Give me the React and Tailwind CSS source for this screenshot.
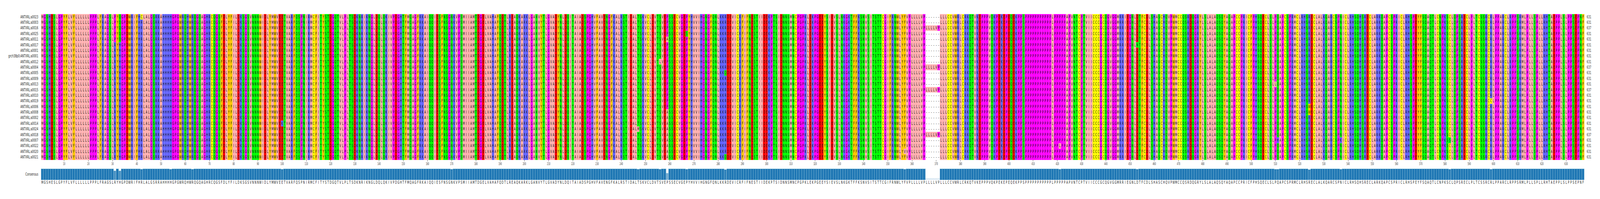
const CONSENSUS = [
  "MGSHESLGPYFLVFLLLLLLPPPLFRAGSLRYHGPDWRIFHRLALGSRRAHHHHGPGWRQHWR",
  "QGQAGHRCQGSFDLYFILDKSGSVNNNWIDLYMWVEETVARFQSPNIRMCFITYSTDGQTVLPLTSDKNRIKNGLDQ",
  "LQKIVPDGHTFMQAGFRKAIQQIESFNSGNKVPSMIIAMTDGELVAHAFQDTLREAQKARKLGANVYTLGVADYNLDQ",
  "ITAIADSPGHVFAVENGFKALRSTIDALTSKVCLDVTSVEPSSECVGEPYHVVIHGNGFQNLKKRDEVICRFIFNESTI",
  "IDEKPTSIDNNSMNCPGPKLEKPGEEYSIEVSLNKGKTFFKSNVSITSTTCGIFRNWLYFVPLLLLVPLLLLVPLLL",
  "CCVWRLCRKQTVKEPPPVQKPEKEPEQEKPPSPPPPPPPPPPPLPPPPPAPVNTCPTVIICCCGCQGVGGMRRIEGNLD",
  "TFCDLSHASCHQVPWMCCQSRDQGRYLSLALAQSQYAQAPCCPRICFPHSQECLSLPQAPCSPRMCLRHSRECLALKQA",
  "RCSPNICLRHSQHSRECLARKQAPCSPRICLRHSPEYFSQAQTLCNPKSCLQPSRECLPLTCSSRCRLPPARCLRPPS",
  "RMLPLLSPLLRHTAEPPLSLPPSEPNF",
].join("");

const LABELS = [
  "ANTXRL:a0023", "ANTXRL:a0003", "ANTXRL:a0016", "ANTXRL:a0025", "ANTXRL:a0011",
  "ANTXRL:a0017", "ANTXRL:a0001", "grch38p0:ANTXRL:a0001", "ANTXRL:a0012", "ANTXRL:a0004",
  "ANTXRL:a0005", "ANTXRL:a0009", "ANTXRL:a0013", "ANTXRL:a0015", "ANTXRL:a0010",
  "ANTXRL:a0019", "ANTXRL:a0006", "ANTXRL:a0008", "ANTXRL:a0002", "ANTXRL:a0014",
  "ANTXRL:a0024", "ANTXRL:a0018", "ANTXRL:a0007", "ANTXRL:a0022", "ANTXRL:a0020",
  "ANTXRL:a0021",
];

// rows that keep the LLLLVP insert at columns 366-371
const INSERT_ROWS = [2, 9, 13, 21];

// [row, column (1-based), residue]
const VARIANTS = [
  [0, 31, "P"], [1, 31, "P"], [2, 31, "P"], [3, 31, "P"], [4, 31, "P"],
  [0, 33, "Q"], [1, 33, "Q"], [2, 33, "Q"], [3, 33, "Q"], [4, 33, "Q"],
  [0, 42, "C"], [13, 54, "R"], [14, 63, "H"], [19, 100, "K"], [11, 170, "S"],
  [20, 247, "M"], [8, 256, "L"], [3, 267, "S"], [10, 283, "Q"], [25, 283, "Q"],
  [4, 259, "A"], [17, 259, "A"], [18, 259, "A"], [19, 259, "A"], [20, 259, "A"],
  [21, 259, "A"], [22, 259, "A"], [23, 259, "A"], [24, 259, "A"], [25, 259, "A"],
  [24, 357, "V"], [23, 421, "L"], [5, 453, "N"], [12, 510, "L"], [22, 511, "H"],
  [16, 524, "W"], [17, 524, "W"], [22, 537, "K"], [22, 582, "S"], [15, 599, "C"],
];

const ZAPPO = {
  A: "bg-[#ffafaf]",
  V: "bg-[#ffafaf]",
  I: "bg-[#ffafaf]",
  L: "bg-[#ffafaf]",
  M: "bg-[#ffafaf]",
  F: "bg-[#ffc800]",
  W: "bg-[#ffc800]",
  Y: "bg-[#ffc800]",
  K: "bg-[#6464ff]",
  R: "bg-[#6464ff]",
  H: "bg-[#6464ff]",
  D: "bg-[#ff0000]",
  E: "bg-[#ff0000]",
  S: "bg-[#00ff00]",
  T: "bg-[#00ff00]",
  N: "bg-[#00ff00]",
  Q: "bg-[#00ff00]",
  G: "bg-[#ff00ff]",
  P: "bg-[#ff00ff]",
  C: "bg-[#ffff00]",
  "-": "bg-white",
};

const buildRows = () =>
  LABELS.map((label, r) => {
    const seq = CONSENSUS.split("");
    if (!INSERT_ROWS.includes(r)) {
      for (let i = 365; i < 371; i++) seq[i] = "-";
    }
    VARIANTS.filter((v) => v[0] === r).forEach((v) => {
      seq[v[1] - 1] = v[2];
    });
    return { label, seq, length: seq.filter((c) => c !== "-").length };
  });

const ROWS = buildRows();
const COLUMNS = CONSENSUS.split("");
const IDENTITY = COLUMNS.map(
  (c, i) => ROWS.filter((row) => row.seq[i] === c).length / ROWS.length,
);

// the browser window can come out narrower than the 6656px plot, so squeeze it to fit
const FIT = Math.min(1, window.innerWidth / 6656);

const Label = ({ children }) => (
  <div className="w-[159px] mr-[12px] shrink-0 text-right whitespace-nowrap text-[#222]">
    {children}
  </div>
);

const App = () => {
  return (
    <div className="w-screen h-[510px] overflow-hidden bg-white">
      <div
        className="w-[6656px] h-[510px] origin-top-left pt-[36px] font-['DejaVu_Sans',sans-serif] [font-stretch:condensed] text-[11px] leading-none"
        style={{ transform: `scaleX(${FIT})` }}
      >
        {/* Alignment */}
        {ROWS.map((row) => (
          <div key={row.label} className="flex items-center h-[14.385px]">
            <Label>{row.label}</Label>
            <div className="flex h-full">
              {row.seq.map((c, i) => (
                <div
                  key={i}
                  className={`w-[10.08px] shrink-0 flex items-center justify-center text-[#111] ${ZAPPO[c]}`}
                >
                  {c}
                </div>
              ))}
            </div>
            <div className="ml-[10px] text-[#333]">{row.length}</div>
          </div>
        ))}

        {/* Ruler */}
        <div className="flex h-[22px]">
          <div className="w-[171px] shrink-0" />
          {COLUMNS.map((_, i) => (
            <div key={i} className="w-[10.08px] shrink-0 flex flex-col items-center">
              {(i + 1) % 10 === 0 && (
                <>
                  <div className="w-px h-[4px] bg-[#333]" />
                  <div className="mt-[3px] text-[8px] text-[#333] whitespace-nowrap">{i + 1}</div>
                </>
              )}
            </div>
          ))}
        </div>

        {/* Consensus identity */}
        <div className="flex items-center h-[29px]">
          <Label>Consensus</Label>
          <div className="flex h-full">
            {IDENTITY.map((v, i) => (
              <div key={i} className="w-[10.08px] shrink-0 flex items-end">
                <div
                  className="w-full bg-[#1f77b4] border-t border-r border-[#add8e6]"
                  style={{ height: `${v * 100}%`, opacity: v }}
                />
              </div>
            ))}
          </div>
        </div>
        <div className="flex h-[14px] pl-[171px]">
          {COLUMNS.map((c, i) => (
            <div key={i} className="w-[10.08px] shrink-0 flex items-center justify-center text-[#222]">
              {c}
            </div>
          ))}
        </div>
      </div>
    </div>
  );
};

export default App;
